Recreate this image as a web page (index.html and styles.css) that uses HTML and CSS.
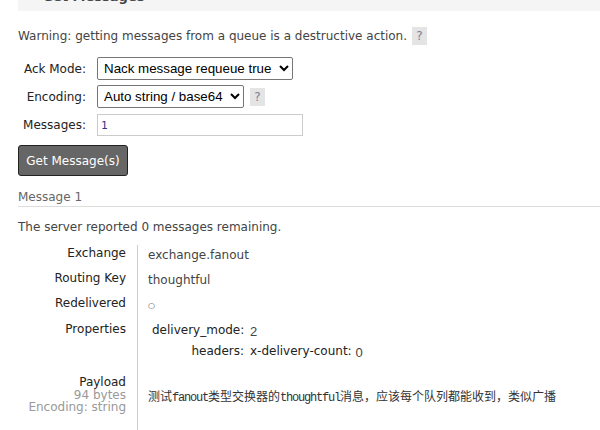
FILE: index.html
```html
<!DOCTYPE html>
<html>
<head>
<meta charset="utf-8">
<link rel="stylesheet" href="styles.css">
</head>
<body>
<div class="page">
  <div class="section-head"><span class="toggle">+</span><span class="head-title">Get Messages</span></div>
  <p class="warning">Warning: getting messages from a queue is a destructive action. <span class="help">?</span></p>
  <div class="form">
    <label class="lbl">Ack Mode:</label>
    <div class="ctl"><select class="sel sel-ack"><option>Nack message requeue true</option></select></div>
    <label class="lbl">Encoding:</label>
    <div class="ctl"><select class="sel sel-enc"><option>Auto string / base64</option></select><span class="help">?</span></div>
    <label class="lbl">Messages:</label>
    <div class="ctl"><input class="txt" type="text" value="1"></div>
  </div>
  <button class="btn">Get Message(s)</button>
  <h3 class="msg-title">Message 1</h3>
  <p class="remaining">The server reported 0 messages remaining.</p>
  <div class="facts">
    <div class="k">Exchange</div><div class="v">exchange.fanout</div>
    <div class="k">Routing Key</div><div class="v">thoughtful</div>
    <div class="k">Redelivered</div><div class="v"><span class="circle">○</span></div>
    <div class="k k-props">Properties</div>
    <div class="v v-props">
      <div class="props">
        <div class="pk">delivery_mode:</div><div class="pv"><abbr class="num">2</abbr></div>
        <div class="pk">headers:</div><div class="pv">x-delivery-count: <abbr class="num">0</abbr></div>
      </div>
    </div>
    <div class="k payload-k">Payload<div class="sub">94 bytes</div><div class="sub">Encoding: string</div></div>
    <div class="v payload-v"><pre class="payload">测试<span class="lat">fanout</span>类型交换器的<span class="lat">thoughtful</span>消息，应该每个队列都能收到，类似广播</pre></div>
  </div>
</div>
</body>
</html>
```
FILE: styles.css
```css
html, body {
  margin: 0;
  padding: 0;
  background: #fff;
}
body {
  font-family: "DejaVu Sans", Verdana, sans-serif;
  font-size: 12px;
  color: #444;
}
.page {
  padding-left: 18px;
  overflow: hidden;
  height: 430px;
}
.section-head {
  margin-top: -19px;
  height: 30px;
  background: #f5f5f5;
  display: flex;
  align-items: center;
  gap: 8px;
  padding-left: 8px;
}
.toggle {
  color: #999;
  font-size: 10px;
}
.head-title {
  font-weight: bold;
  font-size: 13px;
  color: #444;
}
.warning {
  margin: 16px 0 0;
  line-height: 18px;
  color: #444;
}
.help {
  display: inline-block;
  background: #e4e4e4;
  color: #7a7f9a;
  width: 15px;
  height: 18px;
  line-height: 18px;
  text-align: center;
  margin-left: 1px;
}
.form {
  margin-top: 12px;
  display: grid;
  grid-template-columns: 68px auto;
  column-gap: 11px;
  row-gap: 5px;
  align-items: center;
}
.lbl {
  text-align: right;
  color: #222;
}
.ctl {
  display: flex;
  align-items: center;
  gap: 5px;
}
.sel {
  font-family: "Liberation Sans", Arial, sans-serif;
  font-size: 13.33px;
  height: 23px;
  border: 1px solid #767676;
  border-radius: 2px;
  background: #fff;
  color: #000;
  padding: 0 2px;
}
.sel-ack { width: 196px; }
.sel-enc { width: 147px; }
.txt {
  margin-top: 1px;
  width: 206px;
  height: 22px;
  box-sizing: border-box;
  border: 1px solid #ccc;
  font-family: "DejaVu Sans Mono", monospace;
  font-size: 11px;
  color: #338;
  padding: 0 3px;
}
.btn {
  margin-top: 9px;
  display: block;
  width: 110px;
  height: 31px;
  background: #666;
  color: #fff;
  border: 1px solid #222;
  border-radius: 3px;
  font-family: "DejaVu Sans", Verdana, sans-serif;
  font-size: 12px;
  padding: 0;
}
.msg-title {
  margin: 14px 0 0;
  font-weight: normal;
  font-size: 12px;
  color: #666;
  padding-bottom: 2px;
  border-bottom: 1px solid #ddd;
  line-height: 14px;
}
.remaining {
  margin: 12px 0 0;
  line-height: 16px;
  color: #444;
}
.facts {
  margin-top: 10px;
  display: grid;
  grid-template-columns: 119px auto;
  width: 560px;
}
.k {
  text-align: right;
  color: #222;
  padding: 0 11px 0 0;
  line-height: 16px;
  height: 25px;
  box-sizing: border-box;
  white-space: nowrap;
}
.v {
  border-left: 1px solid #ccc;
  padding-left: 10px;
  color: #444;
  line-height: 16px;
  padding-top: 2px;
  height: 25px;
  box-sizing: border-box;
}
.circle {
  font-size: 8px;
  color: #555;
  position: relative;
  top: -1px;
}
.k-props {
  padding-top: 1px;
}
.k-props, .v-props {
  height: 55px;
}
.props {
  display: grid;
  grid-template-columns: 92px auto;
  column-gap: 6px;
  row-gap: 5px;
  margin-left: 4px;
}
.pk {
  text-align: right;
  color: #222;
}
.pv { color: #222; }
.num {
  text-decoration: none;
  font-family: "Liberation Sans", Arial, sans-serif;
  font-size: 13px;
  color: #444;
  position: relative;
  top: 2px;
}
.payload-k {
  height: auto;
  line-height: 12.5px;
  padding-top: 1px;
}
.payload-k .sub {
  color: #999;
}
.payload-v {
  height: 100px;
  padding-top: 13px;
}
.payload {
  margin: 0;
  font-family: "Noto Sans CJK SC", sans-serif;
  font-size: 12px;
  color: #333;
}
.lat {
  font-family: "Liberation Mono", monospace;
  letter-spacing: -1.2px;
}
```
